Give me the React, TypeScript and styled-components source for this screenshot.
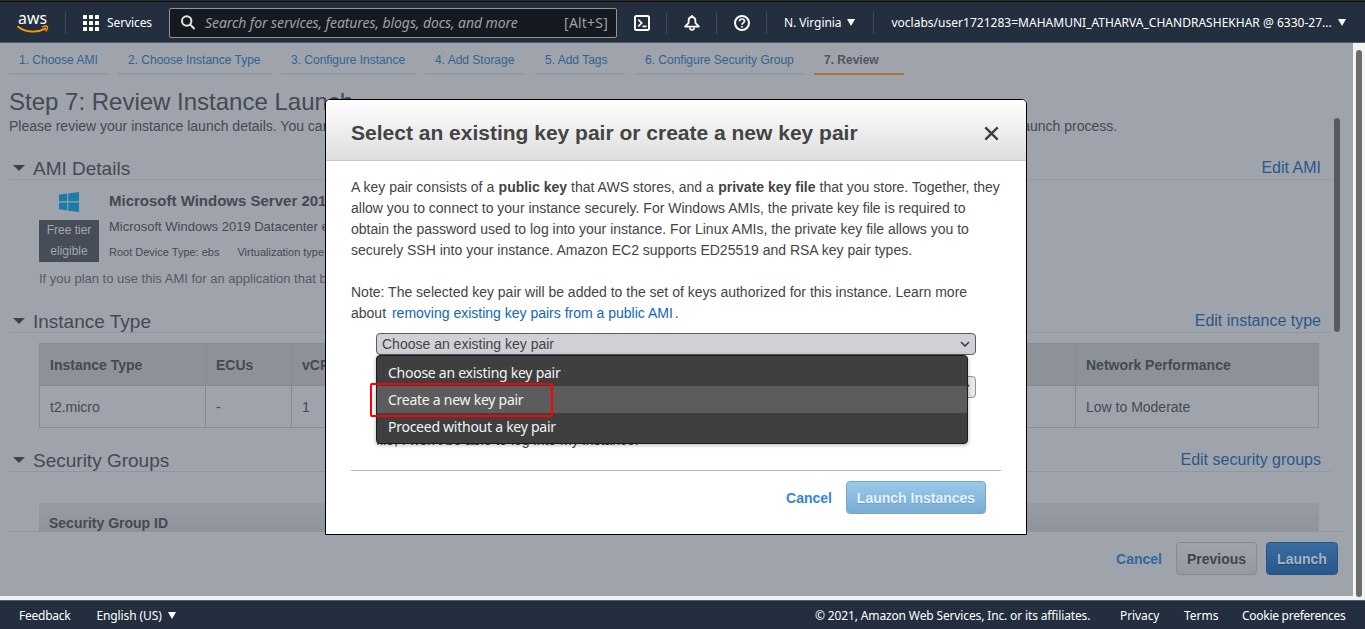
import React from "react";
import styled, { createGlobalStyle, css } from "styled-components";

const Global = createGlobalStyle`
  * { box-sizing: border-box; }
  body { margin: 0; overflow: hidden; font-family: "Liberation Sans", Arial, sans-serif; color: #444; }
`;

const Page = styled.div`
  display: flex;
  flex-direction: column;
  width: 1365px;
  height: 629px;
  background: #f0f1f1;
  white-space: nowrap;
`;

/* ---------- top navigation ---------- */

const TopBar = styled.header`
  display: flex;
  align-items: center;
  height: 43px;
  flex: none;
  padding: 2px 19px 0 17px;
  background: #232f3e;
  border-top: 1px solid #2c2a2e;
  border-bottom: 1px solid #535f6d;
  box-shadow: inset 0 1px 0 #0c0d0f;
  font-family: "Noto Sans", sans-serif;
  font-size: 12px;
  color: #fff;
`;

const Separator = styled.i<{ $left: number; $right: number }>`
  width: 1px;
  height: 22px;
  margin: 0 ${(p) => p.$right}px 0 ${(p) => p.$left}px;
  background: #414b58;
`;

const Label = styled.span<{ $spacing?: number }>`
  letter-spacing: ${(p) => p.$spacing ?? 0}px;
`;

const Services = styled.div`
  display: flex;
  align-items: center;
  gap: 8px;
  width: 86px;
`;

const Search = styled.div`
  display: flex;
  align-items: center;
  width: 448px;
  height: 30px;
  flex: none;
  margin-right: 17px;
  padding: 0 8px 0 11px;
  background: #161a20;
  border: 1px solid #8d9696;
  border-radius: 2px;
  color: #99a3a3;
  font-size: 14px;
`;

const Placeholder = styled.em`
  flex: 1;
  margin-left: 10px;
  letter-spacing: -0.08px;
`;

const Caret = styled.i`
  width: 0;
  height: 0;
  border: 4px solid transparent;
  border-top: 7px solid #fff;
  border-bottom: 0;
`;

const Menu = styled.div`
  display: flex;
  align-items: center;
  gap: 6px;
`;

/* ---------- body frame ---------- */

const Body = styled.div`
  display: flex;
  height: 553px;
  flex: none;
`;

const Console = styled.main`
  position: relative;
  display: flex;
  flex-direction: column;
  width: 1353px;
  background: #9fa3ab;
  color: #444a52;
`;

const ScrollTrack = styled.div`
  flex: 1;
  display: flex;
  padding: 7px 0 0 3px;
  background: #f4f4f4;
`;

const ScrollThumb = styled.div<{ $height: number; $color: string }>`
  width: 6px;
  height: ${(p) => p.$height}px;
  border-radius: 3px;
  background: ${(p) => p.$color};
`;

const Steps = styled.nav`
  display: flex;
  gap: 10px;
  padding-left: 9px;
  height: 32px;
  flex: none;
`;

const Step = styled.a<{ $width: number; $active?: boolean }>`
  width: ${(p) => p.$width}px;
  padding-left: 10px;
  font-size: 12px;
  line-height: 34px;
  color: #30648f;
  border-bottom: 2px solid #949aa3;
  ${(p) =>
    p.$active &&
    css`
      color: #50565e;
      font-weight: bold;
      border-color: #a9762f;
    `}
`;

const Title = styled.h1`
  margin: 13px 0 0 9px;
  font-size: 24px;
  line-height: 28px;
  font-weight: normal;
`;

const Intro = styled.p`
  margin: 0 0 0 9px;
  height: 15px;
  font-size: 14px;
  line-height: 20px;
`;

const ReviewArea = styled.div`
  display: flex;
  height: 401px;
  flex: none;
  margin: 0 10px 0 9px;
  border-bottom: 1px solid #90959d;
`;

const InnerBar = styled.div`
  width: 12px;
  margin-top: -13px;
  padding-left: 3px;
`;

const Sections = styled.div`
  width: 1322px;
  overflow: hidden;
`;

const Section = styled.section<{ $height: number }>`
  height: ${(p) => p.$height}px;
`;

const SectionHead = styled.div`
  display: flex;
  align-items: center;
  height: 49px;
  padding: 27px 10px 0 4px;
  border-bottom: 1px solid #9298a1;
`;

const Arrow = styled.i`
  margin-top: -2px;
  border: 6px solid transparent;
  border-top: 6px solid #3c434c;
  border-bottom: 0;
`;

const SectionTitle = styled.h2`
  flex: 1;
  margin: 0 0 0 8px;
  font-size: 19px;
  font-weight: normal;
  line-height: 22px;
`;

const EditLink = styled.a`
  font-size: 16px;
  line-height: 20px;
  margin-top: -2px;
  color: #29598c;
`;

const AmiRow = styled.div`
  display: flex;
  gap: 10px;
  margin-left: 30px;
  height: 82px;
  padding-top: 12px;
`;

const AmiBadge = styled.div`
  display: flex;
  flex-direction: column;
  align-items: center;
  gap: 8px;
  width: 60px;
`;

const FreeTier = styled.div`
  width: 60px;
  height: 42px;
  font-size: 12px;
  line-height: 21px;
  text-align: center;
  white-space: normal;
  background: #474d56;
  color: #a3a7ae;
`;

const AmiName = styled.div`
  font-size: 15px;
  font-weight: bold;
  line-height: 18px;
`;

const AmiDesc = styled.div`
  margin-top: 9px;
  font-size: 13px;
  line-height: 16px;
`;

const AmiMeta = styled.div`
  display: flex;
  gap: 18px;
  margin-top: 10px;
  font-size: 11px;
  line-height: 14px;
`;

const AmiNote = styled.div`
  margin: 8px 0 0 30px;
  font-size: 13px;
  line-height: 18px;
  color: #555b63;
`;

const Table = styled.div`
  margin: 10px 0 0 30px;
  width: 1280px;
  border: 1px solid #868b93;
`;

const Row = styled.div<{ $head?: boolean }>`
  display: grid;
  grid-template-columns: 165px 86px 130px 180px 220px 254px 1fr;
  height: ${(p) => (p.$head ? 42 : 41)}px;
  font-size: 14px;
  line-height: 42px;
  ${(p) =>
    p.$head &&
    css`
      font-weight: bold;
      background: #8d9299;
      border-bottom: 1px solid #868b93;
    `}
`;

const Cell = styled.div`
  padding-left: 10px;
  & + & {
    border-left: 1px solid #868b93;
  }
`;

const GroupTable = styled.div`
  margin: 31px 0 0 30px;
  width: 1280px;
  height: 42px;
  padding-left: 10px;
  font-size: 14px;
  font-weight: bold;
  line-height: 40px;
  background: linear-gradient(#979ba3, #8b9097);
`;

const Actions = styled.div<{ $pad: number }>`
  display: flex;
  align-items: center;
  justify-content: flex-end;
  gap: 9px;
  padding: 10px ${(p) => p.$pad}px 0 0;
  font-size: 14px;
  font-weight: bold;
`;

const CancelLink = styled.a<{ $color: string }>`
  color: ${(p) => p.$color};
  margin-right: 5px;
`;

const Button = styled.button<{ $width: number; $kind: "grey" | "blue" | "light" }>`
  width: ${(p) => p.$width}px;
  height: 33px;
  padding: 0;
  border-radius: 4px;
  font: bold 14px "Liberation Sans", Arial, sans-serif;
  ${(p) =>
    ({
      grey: css`
        color: #3f454d;
        border: 1px solid #868b92;
        background: linear-gradient(#9fa3aa, #959aa1);
      `,
      blue: css`
        color: #a7b5c6;
        border: 1px solid #235486;
        background: linear-gradient(#3a6ca0, #275889);
        text-shadow: 0 1px 1px #1d4778;
      `,
      light: css`
        color: #e6f2fb;
        border: 1px solid #70a8d0;
        background: linear-gradient(#98caec, #7badd2);
        text-shadow: 0 1px 1px #6c9dc3;
      `,
    })[p.$kind]}
`;

/* ---------- key pair dialog ---------- */

const Dialog = styled.div`
  position: absolute;
  left: 325px;
  top: 56px;
  width: 702px;
  height: 436px;
  border: 1px solid #000;
  border-radius: 5px 5px 0 0;
  background: #fff;
  color: #444;
  font-size: 14px;
`;

const DialogHead = styled.div`
  display: flex;
  justify-content: space-between;
  align-items: center;
  height: 61px;
  padding: 6px 27px 0 25px;
  border-bottom: 1px solid #c8c8c8;
  border-radius: 4px 4px 0 0;
  background: linear-gradient(#fff, #ddd);
`;

const DialogTitle = styled.h3`
  margin: 0;
  font-size: 21px;
  line-height: 24px;
`;

const DialogBody = styled.div`
  height: 310px;
  margin: 0 25px;
  padding-top: 16px;
  border-bottom: 1px solid #b9b9b9;
`;

const Paragraph = styled.p`
  margin: 0 0 21px;
  line-height: 21px;

  b {
    margin: 0 0.2px 0 0.5px;
  }
`;

const DocLink = styled.a`
  color: #1166bb;
  margin: 0 2px;
`;

const Fields = styled.div`
  position: relative;
  margin: -12px 0 0 25px;
  width: 600px;
`;

const Select = styled.div<{ $open?: boolean }>`
  display: flex;
  justify-content: space-between;
  align-items: center;
  height: 22px;
  padding: 0 5px;
  border: 1px solid ${(p) => (p.$open ? "#5b5b66" : "#8f8f9d")};
  border-radius: 4px;
  background: ${(p) => (p.$open ? "#d0d0d7" : "#e9e9ed")};
  & + & {
    margin-top: 21px;
  }
`;

const Acknowledge = styled.div`
  margin-top: 32px;
  line-height: 21px;
`;

const Options = styled.div`
  position: absolute;
  left: 0;
  top: 22px;
  width: 592px;
  height: 89px;
  padding: 3px 0;
  border: 1px solid #1d1d1d;
  border-radius: 4px;
  background: #3f3f3f;
  box-shadow: 0 1px 4px rgba(0, 0, 0, 0.3);
  font-family: "Noto Sans", sans-serif;
  font-size: 14px;
  color: #f3f3f3;
`;

const Option = styled.div<{ $active?: boolean }>`
  height: 27px;
  padding-left: 11px;
  line-height: 27px;
  letter-spacing: -0.26px;
  background: ${(p) => (p.$active ? "#5c5c5c" : "transparent")};
`;

const Marker = styled.div`
  position: absolute;
  left: -6px;
  top: 50px;
  width: 183px;
  height: 34px;
  border: 2px solid #f00;
  border-radius: 2px;
`;

/* ---------- footer ---------- */

const Footer = styled.footer`
  display: flex;
  align-items: center;
  height: 29px;
  margin-top: 4px;
  padding: 1px 20px 0 19px;
  background: #232f3e;
  border-top: 1px solid #535f6d;
  font-family: "Noto Sans", sans-serif;
  font-size: 12px;
  color: #fff;
`;

const FooterLinks = styled.div`
  display: flex;
  gap: 26px;
`;

const FooterEnd = styled.div`
  display: flex;
  margin-left: auto;
`;

const FooterItem = styled.span<{ $width: number; $spacing?: number }>`
  width: ${(p) => p.$width}px;
  letter-spacing: ${(p) => p.$spacing ?? 0}px;
`;

const AwsLogo = () => (
  <svg width="32" height="38" viewBox="0 -9 32 38">
    <text x="1" y="11" textLength="29" lengthAdjust="spacingAndGlyphs" fontFamily="Noto Sans" fontSize="17" fill="#fff">aws</text>
    <path d="M1 13.700C8.500 19.600 20 20 28.400 15.600" fill="none" stroke="#f90" strokeWidth="1.800" strokeLinecap="round" />
    <path d="M25.500 13.800c2-.8 4.300-.8 4.900-.3s-.1 3-1.500 4.500" fill="none" stroke="#f90" strokeWidth="1.300" strokeLinecap="round" />
  </svg>
);

const GridIcon = () => (
  <svg width="16" height="16" viewBox="0 0 16 16" fill="#fff">
    {[0, 6, 12].map((y) => [0, 6, 12].map((x) => <rect key={`${x}-${y}`} x={x} y={y} width="4" height="4" rx="0.6" />))}
  </svg>
);

const SearchIcon = () => (
  <svg width="14" height="15" viewBox="0 0 14 15" fill="none" stroke="#e3e6e6" strokeWidth="2">
    <circle cx="5.700" cy="6" r="4.700" />
    <path d="M9 9.400L13.500 14" />
  </svg>
);

const ShellIcon = () => (
  <svg width="16" height="16" viewBox="0 0 16 16" fill="none" stroke="#fff" strokeWidth="2">
    <rect x="1" y="1" width="14" height="14" rx="1.500" />
    <path d="M4.300 4.500L7.600 8l-3.300 3.500M8.500 11.300h4" strokeWidth="1.800" />
  </svg>
);

const BellIcon = () => (
  <svg width="16" height="16" viewBox="0 0 16 16" fill="none" stroke="#fff" strokeWidth="1.800" strokeLinejoin="round">
    <path d="M8 2C5.400 2 4.600 4 4.600 6v1.800L1.100 11.600h13.800L11.400 7.800V6C11.400 4 10.600 2 8 2z" />
    <path d="M8 0v2M5.800 12.500c0 3.200 4.400 3.200 4.400 0" strokeWidth="1.600" />
  </svg>
);

const HelpIcon = () => (
  <svg width="16" height="16" viewBox="0 0 16 16" fill="none" stroke="#fff" strokeWidth="2">
    <circle cx="8" cy="8" r="7" />
    <path d="M5.500 6.300C5.600 4.500 6.700 4 8 4s2.500.8 2.500 2.100C10.500 7.800 8 7.700 8 9.800M8 10.900v1.700" strokeWidth="1.700" />
  </svg>
);

const WindowsIcon = () => (
  <svg width="20" height="20" viewBox="0 0 20 20" fill="#1b7ca8">
    <path d="M0 2.800L8.200 1.500V9.300H0zM9.200 1.400L20 0V9.300H9.200zM0 10.500H8.200V18.600L0 17.300zM9.200 10.500H20V20L9.200 18.700z" />
  </svg>
);

const CloseIcon = () => (
  <svg width="15" height="15" viewBox="0 0 15 15" stroke="#3f3f3f" strokeWidth="2.400">
    <path d="M1.300 1.300L13.700 13.700M13.700 1.300L1.300 13.700" />
  </svg>
);

const Chevron = () => (
  <svg width="10" height="6" viewBox="0 0 10 6" fill="none" stroke="#3d3d46" strokeWidth="1.600">
    <path d="M1 1l4 4 4-4" />
  </svg>
);

const steps = [
  { label: "1. Choose AMI", width: 99 },
  { label: "2. Choose Instance Type", width: 153 },
  { label: "3. Configure Instance", width: 134 },
  { label: "4. Add Storage", width: 100 },
  { label: "5. Add Tags", width: 90 },
  { label: "6. Configure Security Group", width: 169 },
  { label: "7. Review", width: 90, active: true },
];

const columns = ["Instance Type", "ECUs", "vCPUs", "Memory (GiB)", "Instance Storage (GB)", "EBS-Optimized Available", "Network Performance"];
const values = ["t2.micro", "-", "1", "1", "EBS only", "-", "Low to Moderate"];

const SectionHeader = ({ title, link }: { title: string; link: string }) => (
  <SectionHead>
    <Arrow />
    <SectionTitle>{title}</SectionTitle>
    <EditLink>{link}</EditLink>
  </SectionHead>
);

const KeyPairDialog = () => (
  <Dialog>
    <DialogHead>
      <DialogTitle>Select an existing key pair or create a new key pair</DialogTitle>
      <CloseIcon />
    </DialogHead>
    <DialogBody>
      <Paragraph>
        A key pair consists of a <b>public key</b> that AWS stores, and a <b>private key file</b> that you store. Together, they
        <br />
        allow you to connect to your instance securely. For Windows AMIs, the private key file is required to
        <br />
        obtain the password used to log into your instance. For Linux AMIs, the private key file allows you to
        <br />
        securely SSH into your instance. Amazon EC2 supports ED25519 and RSA key pair types.
      </Paragraph>
      <Paragraph>
        Note: The selected key pair will be added to the set of keys authorized for this instance. Learn more
        <br />
        about <DocLink>removing existing key pairs from a public AMI</DocLink>.
      </Paragraph>
      <Fields>
        <Select $open>
          Choose an existing key pair
          <Chevron />
        </Select>
        <Select>
          <span />
          <Chevron />
        </Select>
        <Acknowledge>file, I won't be able to log into my instance.</Acknowledge>
        <Options>
          <Option>Choose an existing key pair</Option>
          <Option $active>Create a new key pair</Option>
          <Option>Proceed without a key pair</Option>
        </Options>
        <Marker />
      </Fields>
    </DialogBody>
    <Actions $pad={40}>
      <CancelLink $color="#2f86dd">Cancel</CancelLink>
      <Button $width={140} $kind="light">Launch Instances</Button>
    </Actions>
  </Dialog>
);

export default function App() {
  return (
    <Page>
      <Global />
      <TopBar>
        <AwsLogo />
        <Separator $left={16} $right={17} />
        <Services>
          <GridIcon />
          <Label $spacing={-0.1}>Services</Label>
        </Services>
        <Search>
          <SearchIcon />
          <Placeholder>Search for services, features, blogs, docs, and more</Placeholder>
          <Label $spacing={0.2}>[Alt+S]</Label>
        </Search>
        <ShellIcon />
        <Separator $left={16} $right={17} />
        <BellIcon />
        <Separator $left={16} $right={17} />
        <HelpIcon />
        <Separator $left={16} $right={17} />
        <Menu>
          <Label $spacing={-0.08}>N. Virginia</Label>
          <Caret />
        </Menu>
        <Separator $left={18} $right={17} />
        <Menu>
          <Label $spacing={0.015}>voclabs/user1721283=MAHAMUNI_ATHARVA_CHANDRASHEKHAR @ 6330-27...</Label>
          <Caret />
        </Menu>
      </TopBar>
      <Body>
        <Console>
          <Steps>
            {steps.map((s) => (
              <Step key={s.label} $width={s.width} $active={s.active}>{s.label}</Step>
            ))}
          </Steps>
          <Title>Step 7: Review Instance Launch</Title>
          <Intro>
            Please review your instance launch details. You can go back to edit changes for each section. Click <b>Launch</b> to assign a key pair to your instance and complete the launch process.
          </Intro>
          <ReviewArea>
            <Sections>
              <Section $height={153}>
                <SectionHeader title="AMI Details" link="Edit AMI" />
                <AmiRow>
                  <AmiBadge>
                    <WindowsIcon />
                    <FreeTier>Free tier eligible</FreeTier>
                  </AmiBadge>
                  <div>
                    <AmiName>Microsoft Windows Server 2019 Base</AmiName>
                    <AmiDesc>Microsoft Windows 2019 Datacenter edition. [English]</AmiDesc>
                    <AmiMeta>
                      <span>Root Device Type: ebs</span>
                      <span>Virtualization type: hvm</span>
                    </AmiMeta>
                  </div>
                </AmiRow>
                <AmiNote>If you plan to use this AMI for an application that benefits</AmiNote>
              </Section>
              <Section $height={139}>
                <SectionHeader title="Instance Type" link="Edit instance type" />
                <Table>
                  <Row $head>{columns.map((c) => <Cell key={c}>{c}</Cell>)}</Row>
                  <Row>{values.map((v, i) => <Cell key={i}>{v}</Cell>)}</Row>
                </Table>
              </Section>
              <Section $height={120}>
                <SectionHeader title="Security Groups" link="Edit security groups" />
                <GroupTable>Security Group ID</GroupTable>
              </Section>
            </Sections>
            <InnerBar>
              <ScrollThumb $height={214} $color="#555a63" />
            </InnerBar>
          </ReviewArea>
          <Actions $pad={15}>
            <CancelLink $color="#33679f">Cancel</CancelLink>
            <Button $width={81} $kind="grey">Previous</Button>
            <Button $width={72} $kind="blue">Launch</Button>
          </Actions>
          <KeyPairDialog />
        </Console>
        <ScrollTrack>
          <ScrollThumb $height={547} $color="#6b6b6b" />
        </ScrollTrack>
      </Body>
      <Footer>
        <FooterLinks>
          <Label $spacing={-0.25}>Feedback</Label>
          <Menu>
            <Label $spacing={-0.1}>English (US)</Label>
            <Caret />
          </Menu>
        </FooterLinks>
        <FooterEnd>
          <FooterItem $width={305} $spacing={-0.14}>© 2021, Amazon Web Services, Inc. or its affiliates.</FooterItem>
          <FooterItem $width={64} $spacing={-0.1}>Privacy</FooterItem>
          <FooterItem $width={58}>Terms</FooterItem>
          <FooterItem $width={103} $spacing={-0.27}>Cookie preferences</FooterItem>
        </FooterEnd>
      </Footer>
    </Page>
  );
}
